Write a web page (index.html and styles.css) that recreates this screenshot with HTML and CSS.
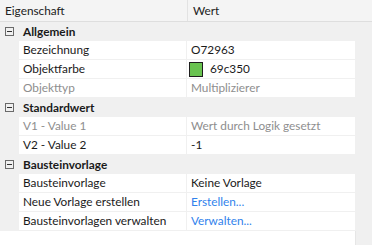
FILE: index.html
```html
<!DOCTYPE html>
<html lang="de">
<head>
<meta charset="utf-8">
<link rel="stylesheet" href="styles.css">
</head>
<body>
<div class="pg">
  <div class="head">
    <div class="hcell hname">Eigenschaft</div>
    <div class="hcell">Wert</div>
  </div>
  <div class="body">
    <div class="rows">
      <div class="cat"><span class="tog"></span><span class="ctext">Allgemein</span></div>
      <div class="row"><div class="lbl">Bezeichnung</div><div class="val">O72963</div><div class="rest"></div></div>
      <div class="row"><div class="lbl">Objektfarbe</div><div class="val"><span class="swatch"></span><span class="swtext">69c350</span></div><div class="rest"></div></div>
      <div class="row"><div class="lbl dis">Objekttyp</div><div class="val dis">Multiplizierer</div><div class="rest"></div></div>
      <div class="cat"><span class="tog"></span><span class="ctext">Standardwert</span></div>
      <div class="row"><div class="lbl dis">V1 - Value 1</div><div class="val dis">Wert durch Logik gesetzt</div><div class="rest"></div></div>
      <div class="row"><div class="lbl">V2 - Value 2</div><div class="val">-1</div><div class="rest"></div></div>
      <div class="cat"><span class="tog"></span><span class="ctext">Bausteinvorlage</span></div>
      <div class="row"><div class="lbl">Bausteinvorlage</div><div class="val">Keine Vorlage</div><div class="rest"></div></div>
      <div class="row"><div class="lbl">Neue Vorlage erstellen</div><div class="val link">Erstellen...</div><div class="rest"></div></div>
      <div class="row"><div class="lbl">Bausteinvorlagen verwalten</div><div class="val link">Verwalten...</div><div class="rest"></div></div>
    </div>
    <div class="empty"><div class="efill"></div><div class="estrip"></div></div>
  </div>
</div>
</body>
</html>
```
FILE: styles.css
```css
html, body {
  margin: 0;
  padding: 0;
  background: #ffffff;
}
.pg {
  width: 372px;
  height: 245px;
  display: flex;
  flex-direction: column;
  font-family: Lato, "Noto Sans", sans-serif;
  font-size: 11.8px;
  color: #1a1a1a;
  overflow: hidden;
}
.head {
  height: 21px;
  border-bottom: 1px solid #dedede;
  background: #f4f4f4;
  display: flex;
}
.hcell {
  line-height: 21px;
  padding-left: 5px;
  color: #222;
}
.hname {
  width: 182px;
  border-right: 1px solid #e2e2e2;
}
.body {
  flex: 1;
  display: flex;
  flex-direction: column;
}
.rows {
  display: flex;
  flex-direction: column;
  gap: 1px;
  padding-bottom: 1px;
  background: #f0f0f0;
}
.cat {
  height: 18px;
  display: flex;
  align-items: center;
  background: #f0f0f0;
}
.tog {
  width: 7px;
  height: 7px;
  border: 1px solid #6a6a6a;
  margin-left: 5px;
  margin-right: 9px;
  position: relative;
  box-sizing: content-box;
}
.tog::after {
  content: "";
  position: absolute;
  left: 1px;
  top: 3px;
  width: 5px;
  height: 1px;
  background: #333;
}
.ctext {
  font-weight: bold;
  color: #1a1a1a;
}
.row {
  height: 18px;
  display: flex;
  padding-left: 19px;
  gap: 1px;
}
.lbl, .val {
  background: #ffffff;
  line-height: 18px;
  white-space: nowrap;
  overflow: hidden;
}
.lbl {
  width: 163px;
  padding-left: 4px;
}
.val {
  width: 164px;
  padding-left: 4px;
  display: flex;
  align-items: center;
}
.rest {
  flex: 1;
  background: #f0f0f0;
}
.dis {
  color: #8e8e8e;
}
.link {
  color: #3182ec;
}
.swatch {
  width: 12px;
  height: 13px;
  border: 1px solid #1e1e1e;
  background: #69c350;
  margin-left: -2px;
  margin-right: 7px;
  flex: none;
}
.empty {
  flex: 1;
  display: flex;
}
.efill {
  width: 355px;
  background: #ffffff;
}
.estrip {
  flex: 1;
  background: #f0f0f0;
  border-left: 1px solid #e6e6e6;
}
```
